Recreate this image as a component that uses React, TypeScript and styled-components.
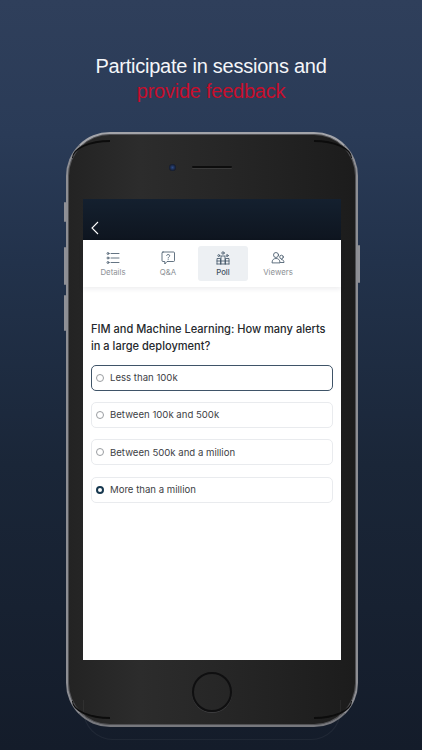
import React, { useState } from 'react';
import styled, { createGlobalStyle } from 'styled-components';

const GlobalStyle = createGlobalStyle`
  html, body {
    margin: 0;
    padding: 0;
    height: 100%;
    overflow: hidden;
    background: #141c2a;
  }
`;

const Page = styled.div`
  width: 422px;
  height: 750px;
  overflow: hidden;
  display: flex;
  flex-direction: column;
  align-items: center;
  background: linear-gradient(180deg, #2f3f5b 0%, #2a3b57 18%, #22324b 35%, #1a2638 62%, #141c2a 100%);
  font-family: Inter, "Liberation Sans", sans-serif;
`;

const Heading = styled.h1`
  margin: 54px 0 0;
  height: 78px;
  font-family: "Liberation Sans", Arial, sans-serif;
  font-weight: 400;
  font-size: 20px;
  letter-spacing: -0.25px;
  line-height: 25px;
  text-align: center;
  color: #f4f6f9;
`;

const Accent = styled.span`
  display: block;
  color: #c70e2c;
`;

const Phone = styled.div`
  position: relative;
  flex: none;
  box-sizing: border-box;
  width: 292px;
  height: 595px;
  margin-left: 2px;
  padding: 65px 15px;
  border-radius: 44px;
  border: 2px solid #8d8e93;
  border-top-color: #a3a4a9;
  border-bottom-color: #77787d;
  background: linear-gradient(90deg, #232323 0%, #2c2c2c 25%, #262626 55%, #1c1c1c 100%);
  box-shadow: inset 0 0 0 1px #525255;
  display: flex;
  flex-direction: column;
`;

const SideButton = styled.span<{ $side: 'left' | 'right'; $top: number; $height: number }>`
  position: absolute;
  ${p => p.$side}: -4px;
  top: ${p => p.$top}px;
  width: 2px;
  height: ${p => p.$height}px;
  background: #8f9096;
  border-radius: 1px;
`;

const Crescent = styled.span<{ $v: 'top' | 'bottom'; $h: 'left' | 'right' }>`
  position: absolute;
  ${p => p.$v}: 6px;
  ${p => p.$h}: 4px;
  box-sizing: border-box;
  width: 38px;
  height: 18px;
  border-${p => p.$v}: 2.5px solid #0c0c0c;
  border-${p => p.$h}: 1.5px solid #0c0c0c;
  border-${p => p.$v}-${p => p.$h}-radius: 100%;
`;

const Reflection = styled.span`
  position: absolute;
  left: 15px;
  right: 15px;
  bottom: -15px;
  height: 40px;
  box-sizing: border-box;
  border: 1px solid rgba(255, 255, 255, 0.05);
  border-top: none;
  border-radius: 0 0 30px 30px;
`;

const Camera = styled.span`
  position: absolute;
  left: 100.5px;
  top: 29.5px;
  width: 7px;
  height: 7px;
  border-radius: 50%;
  background: radial-gradient(circle at 50% 50%, #2c4a86 0%, #18233d 55%, #0b0b0d 100%);
`;

const Speaker = styled.span`
  position: absolute;
  left: 124px;
  top: 32px;
  width: 40px;
  height: 2px;
  border-radius: 2px;
  background: #0d0d0d;
  box-shadow: 0 1px 0 #3a3a3a;
`;

const HomeButton = styled.span`
  position: absolute;
  left: 124px;
  bottom: 13px;
  box-sizing: border-box;
  width: 40px;
  height: 40px;
  border-radius: 50%;
  border: 2px solid #0f0f10;
  box-shadow: 0 1px 0 #3d3d3f;
`;

const Screen = styled.div`
  flex: 1;
  display: flex;
  flex-direction: column;
  background: #fff;
  min-height: 0;
`;

const TopBar = styled.div`
  height: 41px;
  flex: none;
  box-sizing: border-box;
  padding: 0 0 5px 8px;
  display: flex;
  align-items: flex-end;
  background: linear-gradient(180deg, #14202f 0%, #0e151f 100%);
`;

const Tabs = styled.div`
  height: 47px;
  flex: none;
  box-sizing: border-box;
  padding: 6px 0 6px 5px;
  display: flex;
  gap: 5px;
  background: #fff;
  box-shadow: 0 2px 5px rgba(20, 30, 45, 0.08);
`;

const Tab = styled.div<{ $active?: boolean }>`
  width: 50px;
  border-radius: 3px;
  display: flex;
  flex-direction: column;
  align-items: center;
  padding-top: 5px;
  box-sizing: border-box;
  background: ${p => (p.$active ? '#edf0f3' : 'transparent')};
  color: ${p => (p.$active ? '#3f5062' : '#8c9095')};
  font-size: 7.8px;
  font-weight: ${p => (p.$active ? 500 : 400)};
  line-height: 12px;
`;

const TabIcon = styled.svg`
  width: 14px;
  height: 14px;
  margin-bottom: 1px;
  fill: none;
  stroke: #3c5163;
  stroke-width: 0.8;
  stroke-linecap: round;
  stroke-linejoin: round;
`;

const Poll = styled.div`
  padding: 34px 8px 0;
  display: flex;
  flex-direction: column;
`;

const Question = styled.div`
  margin-bottom: 9.5px;
  font-size: 11.05px;
  font-weight: 500;
  line-height: 17px;
  color: #26292d;
`;

const Options = styled.div`
  display: flex;
  flex-direction: column;
  gap: 11.4px;
`;

const Option = styled.div<{ $focused?: boolean }>`
  box-sizing: border-box;
  height: 26px;
  padding-left: 4px;
  display: flex;
  align-items: center;
  gap: 6px;
  border-radius: 5px;
  border: 1px solid ${p => (p.$focused ? '#3f5468' : '#e9ebee')};
  font-size: 9.6px;
  color: #3d4145;
`;

const Radio = styled.span<{ $checked?: boolean }>`
  box-sizing: border-box;
  flex: none;
  width: 8px;
  height: 8px;
  border-radius: 50%;
  background: #fff;
  border: ${p => (p.$checked ? '2.5px solid #17384f' : '1.2px solid #9a9da1')};
`;

const tabs = ['Details', 'Q&A', 'Poll', 'Viewers'];

const answers = ['Less than 100k', 'Between 100k and 500k', 'Between 500k and a million', 'More than a million'];

function TabGlyph({ name }: { name: string }) {
  if (name === 'Details') {
    return (
      <TabIcon viewBox="0 0 14 14">
        <circle cx="2" cy="2.5" r="1" />
        <circle cx="2" cy="7" r="1" />
        <circle cx="2" cy="11.5" r="1" />
        <path d="M5 2.5h8M5 7h8M5 11.5h8" />
      </TabIcon>
    );
  }
  if (name === 'Q&A') {
    return (
      <TabIcon viewBox="0 0 14 14">
        <path d="M2 1h10.500a1 1 0 0 1 1 1v7.500a1 1 0 0 1-1 1H6L3.800 13v-2.500H2a1 1 0 0 1-1-1V2a1 1 0 0 1 1-1z" />
        <path d="M5.500 4.300c.2-1 3.200-1.300 3.200.4 0 1.100-1.500 1.100-1.500 2.300M7.200 8.600v.1" />
      </TabIcon>
    );
  }
  if (name === 'Poll') {
    return (
      <TabIcon viewBox="0 0 14 14">
        <circle cx="7" cy="2" r="1.200" />
        <circle cx="2.800" cy="4.600" r="1" />
        <circle cx="11.200" cy="4.600" r="1" />
        <path d="M1 13V7.500h3.500V13M5 13V5h4v8M9.500 13V7.500H13V13M1 10h12M1 13h12" />
      </TabIcon>
    );
  }
  return (
    <TabIcon viewBox="0 0 14 14">
      <circle cx="5" cy="4" r="2.500" />
      <circle cx="10.500" cy="6" r="1.800" />
      <path d="M1 11.500c0-3 2-4 4-4s4 1 4 4zM9.500 11.500H13c0-2-1.200-3-2.500-3" />
    </TabIcon>
  );
}

export default function App() {
  const [selected, setSelected] = useState(3);

  return (
    <Page>
      <GlobalStyle />
      <Heading>
        Participate in sessions and
        <Accent>provide feedback</Accent>
      </Heading>
      <Phone>
        <Reflection />
        <SideButton $side="left" $top={68} $height={20} />
        <SideButton $side="left" $top={113} $height={38} />
        <SideButton $side="left" $top={161} $height={36} />
        <SideButton $side="right" $top={111} $height={38} />
        <Crescent $v="top" $h="left" />
        <Crescent $v="top" $h="right" />
        <Crescent $v="bottom" $h="left" />
        <Crescent $v="bottom" $h="right" />
        <Camera />
        <Speaker />
        <HomeButton />
        <Screen>
          <TopBar>
            <svg width="8" height="14" viewBox="0 0 8 14" fill="none" stroke="#fff" strokeWidth="1.100">
              <path d="M7 1 1 7l6 6" />
            </svg>
          </TopBar>
          <Tabs>
            {tabs.map(tab => (
              <Tab key={tab} $active={tab === 'Poll'}>
                <TabGlyph name={tab} />
                {tab}
              </Tab>
            ))}
          </Tabs>
          <Poll>
            <Question>FIM and Machine Learning: How many alerts in a large deployment?</Question>
            <Options>
              {answers.map((answer, i) => (
                <Option key={answer} $focused={i === 0} onClick={() => setSelected(i)}>
                  <Radio $checked={selected === i} />
                  {answer}
                </Option>
              ))}
            </Options>
          </Poll>
        </Screen>
      </Phone>
    </Page>
  );
}
